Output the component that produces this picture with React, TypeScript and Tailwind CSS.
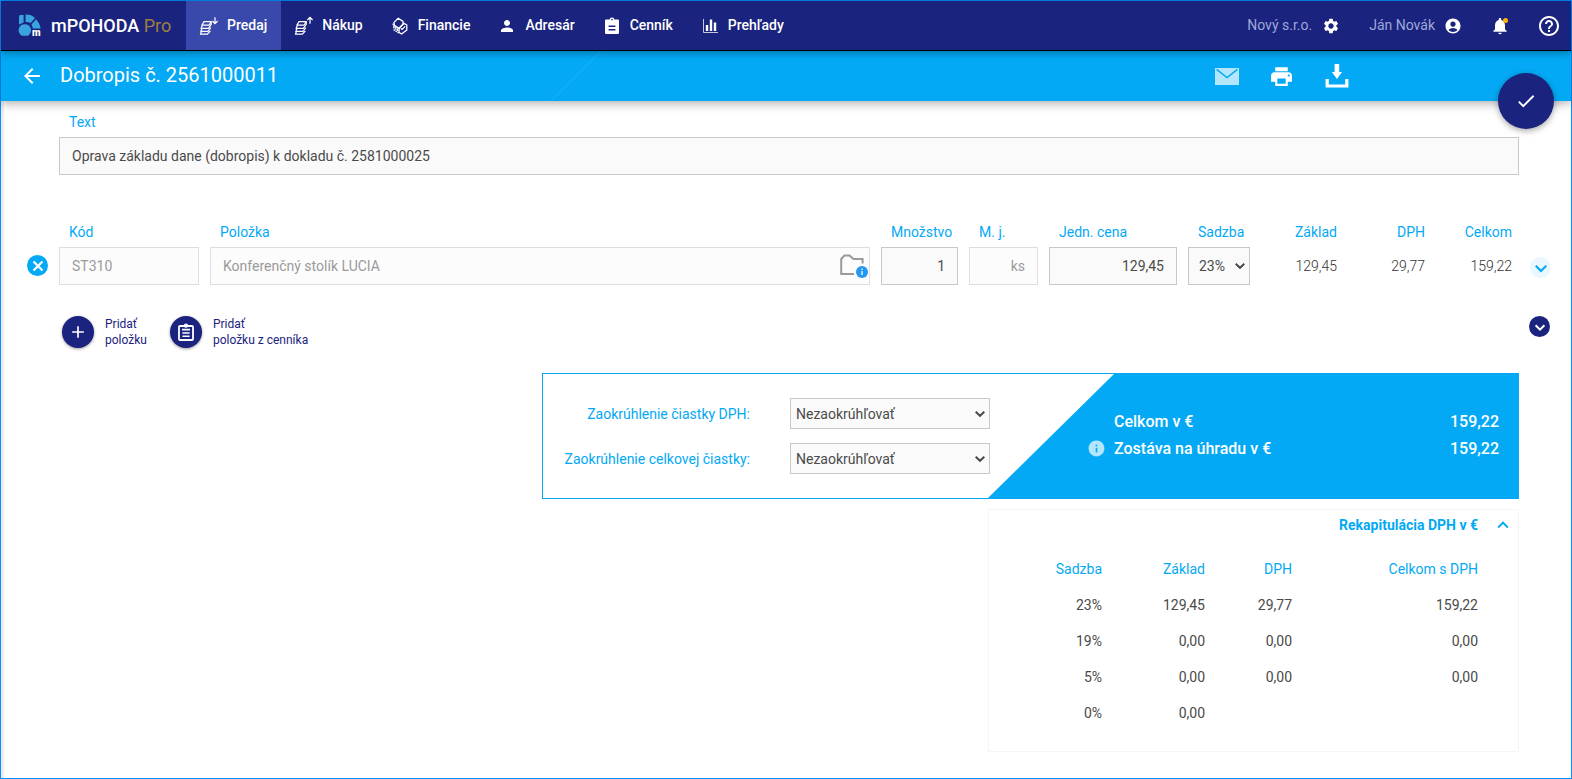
import React from "react";
import {
  MdAccountCircle,
  MdAdd,
  MdArrowBack,
  MdCheck,
  MdHelpOutline,
  MdInfo,
  MdKeyboardArrowUp,
  MdNotifications,
  MdPerson,
  MdPrint,
  MdSettings,
} from "react-icons/md";

function Logo() {
  return (
    <svg viewBox="0 0 24 24" className="size-6 shrink-0" aria-hidden="true">
      <g fill="#3aa3df">
        <path d="M2.2 1H5.6V8.6L1 10.6V2.6Q1.1 1.2 2.2 1Z" />
        <path d="M7.6 .6C11 .4 14.6 1.6 17 4L12.6 9C11 8.2 9.4 8 7.6 8Z" />
        <path d="M18 5.2C20.8 8 22.2 11 22.6 14.4H14.8C14.6 13 14 11.6 13.4 10.6Z" />
        <path d="M7 10.2a6 6 0 0 1 4.8 9.6Q10.8 21.8 9.4 21.8H4.4Q2.8 21.8 2 20A6 6 0 0 1 7 10.2Z" />
      </g>
      <text x="14" y="22" fill="#fff" fontSize="10" fontWeight="900" fontFamily="Roboto, sans-serif">
        m
      </text>
    </svg>
  );
}

function Coins({ up = false }: { up?: boolean }) {
  return (
    <svg viewBox="0 0 18 18" className="size-[18px] shrink-0 overflow-visible" fill="none" stroke="currentColor" aria-hidden="true">
      <g strokeWidth="1.2" strokeLinejoin="round">
        <path d="M4 4.6H11.2L9 8.2H1.8Z" />
        <path d="M2.4 8.4L1 11.4H8.4L11.2 7.4V4.6" />
        <path d="M2 11.6L.8 14.4H8L10.8 10.6" />
        <path d="M1.4 14.6L.4 17.2H7.4L10.4 13.8" />
      </g>
      {up ? (
        <path strokeWidth="1.2" d="M15 6.8V.6M12.4 3L15 .4 17.6 3" />
      ) : (
        <path strokeWidth="1.2" d="M15 .2V6.4M12.4 4L15 6.6 17.6 4" />
      )}
    </svg>
  );
}

function Banknotes() {
  return (
    <svg viewBox="0 0 18 18" className="size-[18px] shrink-0" fill="none" stroke="currentColor" strokeWidth="1.3" strokeLinejoin="round" aria-hidden="true">
      <path d="M3 5.4L7.2 1.2 12 4.4V7.4L8 11.4 3.4 8.2Z" />
      <path d="M8.2 11L13 6.2 15.8 8V13L10.6 17 8 15.4Z" />
      <path d="M9.8 11.2L11.2 12.4 14.2 9.4" />
      <path d="M2.2 6.6V8.8L7.8 12.6M2.2 10.2L7.8 14.2M2.6 12.6L8.4 16.4" strokeDasharray="1.6 .7" />
    </svg>
  );
}

function ClipboardSolid() {
  return (
    <svg viewBox="0 0 18 18" className="size-[18px] shrink-0" aria-hidden="true">
      <path fill="currentColor" d="M3.2 2.4H6.6A2.4 1.8 0 0 1 11.4 2.4H14.8Q16 2.4 16 3.6V15.8Q16 17 14.8 17H3.2Q2 17 2 15.8V3.6Q2 2.4 3.2 2.4Z" />
      <path stroke="#1a237e" strokeWidth="1.6" d="M5.6 9.2H12.4M5.6 12.8H12.4" />
      <circle cx="9" cy="2.6" r=".8" fill="#1a237e" />
    </svg>
  );
}

function BarChart() {
  return (
    <svg viewBox="0 0 18 18" className="size-[18px] shrink-0" fill="none" stroke="currentColor" aria-hidden="true">
      <path strokeWidth="1" opacity=".75" d="M2.5 2V15.5H17" />
      <path strokeWidth="2.4" d="M6 8V14M10 2.6V14M14 5.6V14" />
    </svg>
  );
}

function ClipboardOutline() {
  return (
    <svg viewBox="0 0 18 18" className="size-[18px]" fill="none" stroke="currentColor" aria-hidden="true">
      <rect x="2" y="3" width="14" height="14" rx="1" strokeWidth="1.8" />
      <path strokeWidth="1.6" d="M5 6.6H13M5.4 10H12.6M5.4 13.2H12.6" />
      <circle cx="9" cy="2.6" r="1.5" strokeWidth="1.4" />
    </svg>
  );
}

function Mail() {
  return (
    <svg viewBox="0 0 24 17" className="h-[17px] w-6" aria-hidden="true">
      <rect width="24" height="17" fill="#b3e5fc" />
      <path d="M1.6 1.4L12 9.6 22.4 1.4" fill="none" stroke="#03a9f4" strokeWidth="1.4" />
    </svg>
  );
}

function Download() {
  return (
    <svg viewBox="0 0 24 24" className="size-6" aria-hidden="true">
      <path fill="#fff" d="M9.6 0H14.2V8H17L12 15 6.8 8H9.6Z" />
      <path fill="#fff" d="M.6 15H3.8V20.4H20.2V15H23.4V23.6H.6Z" />
    </svg>
  );
}

function FolderInfo() {
  return (
    <svg viewBox="0 0 30 26" className="h-[26px] w-[30px]" fill="none" aria-hidden="true">
      <path stroke="#9a9a9a" strokeWidth="2" d="M15 21H2.2V6L5.4 2.6H10.6L14.4 6H23.6V10.6" />
      <circle cx="23" cy="19" r="6" fill="#2196f3" />
      <path stroke="#d6ecff" strokeWidth="1.6" d="M23 18V22M23 15.6V17" />
    </svg>
  );
}

const navItems = [
  { label: "Predaj", icon: <Coins />, active: true },
  { label: "Nákup", icon: <Coins up /> },
  { label: "Financie", icon: <Banknotes /> },
  { label: "Adresár", icon: <MdPerson className="size-[18px]" /> },
  { label: "Cenník", icon: <ClipboardSolid /> },
  { label: "Prehľady", icon: <BarChart /> },
];

const vatRows = [
  ["23%", "129,45", "29,77", "159,22"],
  ["19%", "0,00", "0,00", "0,00"],
  ["5%", "0,00", "0,00", "0,00"],
  ["0%", "0,00", "", ""],
];

const labelClass = "block text-sm leading-5 text-[#03a9f4]";
const fieldClass = "mt-[5px] block h-[38px] w-full border border-[#c8c8c8] bg-[#fafafa] px-3 text-sm text-[#4a4a4a] outline-none";
const disabledClass = "mt-[5px] block h-[38px] w-full border border-[#dedede] bg-[#fcfcfc] px-3 text-sm text-[#9a9a9a] outline-none";

function Amount({ label, value }: { label: string; value: string }) {
  return (
    <div className="text-right">
      <span className={labelClass}>{label}</span>
      <span className="mt-[5px] block text-sm leading-[38px] font-light text-[#333]">{value}</span>
    </div>
  );
}

function SelectBox({ id, options, className }: { id: string; options: string[]; className: string }) {
  return (
    <div className="relative">
      <select
        id={id}
        className={"block appearance-none border border-[#c8c8c8] bg-[#fafafa] text-sm text-[#4a4a4a] outline-none " + className}
      >
        {options.map((option) => (
          <option key={option}>{option}</option>
        ))}
      </select>
      <svg
        viewBox="0 0 10 10"
        className="pointer-events-none absolute inset-y-0 right-[5px] my-auto size-2.5"
        fill="none"
        aria-hidden="true"
      >
        <path d="M.7 2.8L5 6.8 9.3 2.8" stroke="#4a4a4a" strokeWidth="2" />
      </svg>
    </div>
  );
}

function Rounding({ id, label }: { id: string; label: string }) {
  return (
    <div className="flex items-center justify-end gap-10">
      <label htmlFor={id} className="text-sm text-[#03a9f4]">
        {label}
      </label>
      <SelectBox id={id} options={["Nezaokrúhľovať", "Zaokrúhľovať"]} className="h-[31px] w-[200px] pl-[5px]" />
    </div>
  );
}

export default function App() {
  return (
    <div className="flex min-h-screen flex-col border border-[#0090ff] bg-white font-[Roboto,sans-serif] text-sm text-[#4a4a4a]">
      <header className="relative z-20 flex h-[50px] items-stretch border-b border-black bg-[#1a237e] text-white shadow-[0_1px_8px_rgba(0,0,0,0.4)]">
        <a href="#" className="flex w-[185px] items-center gap-[9px] pl-[17px] text-lg">
          <Logo />
          <span className="font-medium">
            mPOHODA <span className="font-normal text-[#a08040]">Pro</span>
          </span>
        </a>
        <nav className="flex">
          {navItems.map((item) => (
            <a
              key={item.label}
              href="#"
              className={
                item.active
                  ? "flex items-center gap-[9px] bg-[#3949ab] px-3.5 font-medium"
                  : "flex items-center gap-[9px] px-3.5 font-medium"
              }
            >
              {item.icon}
              <span className="pb-0.5">{item.label}</span>
            </a>
          ))}
        </nav>
        <div className="ml-auto flex items-center pr-2.5 text-[#9fa8da]">
          <button className="mr-[29px] flex items-center gap-2.5">
            <span className="pb-0.5">Nový s.r.o.</span>
            <MdSettings className="size-[18px] text-white" />
          </button>
          <button className="mr-[28px] flex items-center gap-[9px]">
            <span className="pb-0.5">Ján Novák</span>
            <MdAccountCircle className="size-[18px] text-white" />
          </button>
          <button className="relative mr-[27px]" aria-label="Upozornenia">
            <MdNotifications className="size-5 text-white" />
            <span className="absolute top-0.5 right-0.5 size-[5px] rounded-full bg-[#ffb300]" />
          </button>
          <button aria-label="Pomocník">
            <MdHelpOutline className="size-6 text-white" />
          </button>
        </div>
      </header>

      <div className="relative z-10 flex h-[50px] items-center bg-[#03a9f4] text-white shadow-[0_2px_10px_rgba(0,0,0,0.35)]">
        <svg viewBox="0 0 50 50" className="absolute left-[35%] h-full" aria-hidden="true">
          <path d="M0 50L50 0" stroke="#fff" strokeWidth="1" opacity=".1" />
        </svg>
        <a href="#" className="mr-4 ml-[19px]" aria-label="Späť">
          <MdArrowBack className="size-6" />
        </a>
        <h1 className="pb-0.5 text-xl">Dobropis č. 2561000011</h1>
        <div className="mr-[207px] ml-auto flex items-center">
          <button aria-label="Odoslať" className="flex w-[55px] justify-center">
            <Mail />
          </button>
          <button aria-label="Tlačiť" className="flex w-[55px] justify-center">
            <MdPrint className="size-[25px]" />
          </button>
          <button aria-label="Stiahnuť" className="flex w-[55px] justify-center">
            <Download />
          </button>
        </div>
        <button
          aria-label="Uložiť"
          className="absolute top-[22px] right-[17px] flex size-14 items-center justify-center rounded-full bg-[#1a237e] shadow-[0_2px_6px_rgba(0,0,0,0.35)]"
        >
          <MdCheck className="size-[22px]" />
        </button>
      </div>

      <main className="flex-1 border-l-[3px] border-[#eeeaf0] pt-[11px] pr-5 pb-6 pl-[23px]">
        <div className="mx-8">
          <label htmlFor="text" className={labelClass + " pl-2.5"}>
            Text
          </label>
          <input id="text" className={fieldClass} defaultValue="Oprava základu dane (dobropis) k dokladu č. 2581000025" />
        </div>

        <div className="mt-[47px] grid grid-cols-[21px_140px_minmax(0,1fr)_77px_69px_128px_62px_76px_77px_76px_28px] gap-x-[11px]">
          <button aria-label="Odstrániť" className="mt-[33px] flex size-[21px] items-center justify-center rounded-full bg-[#03a9f4]">
            <svg viewBox="0 0 12 12" className="size-3" aria-hidden="true">
              <path d="M1.5 1.5L10.5 10.5M10.5 1.5L1.5 10.5" stroke="#fff" strokeWidth="2.2" />
            </svg>
          </button>
          <div>
            <label htmlFor="code" className={labelClass + " pl-2.5"}>
              Kód
            </label>
            <input id="code" disabled className={disabledClass} defaultValue="ST310" />
          </div>
          <div>
            <label htmlFor="item" className={labelClass + " pl-2.5"}>
              Položka
            </label>
            <div className="relative">
              <input id="item" disabled className={disabledClass} defaultValue="Konferenčný stolík LUCIA" />
              <button aria-label="Detail položky" className="absolute top-1.5 right-px">
                <FolderInfo />
              </button>
            </div>
          </div>
          <div>
            <label htmlFor="qty" className={labelClass + " pl-2.5"}>
              Množstvo
            </label>
            <input id="qty" className={fieldClass + " text-right"} defaultValue="1" />
          </div>
          <div>
            <label htmlFor="unit" className={labelClass + " pl-2.5"}>
              M. j.
            </label>
            <input id="unit" disabled className={disabledClass + " text-right"} defaultValue="ks" />
          </div>
          <div>
            <label htmlFor="price" className={labelClass + " pl-2.5"}>
              Jedn. cena
            </label>
            <input id="price" className={fieldClass + " text-right"} defaultValue="129,45" />
          </div>
          <div className="flex flex-col gap-[5px]">
            <label htmlFor="rate" className={labelClass + " pl-2.5"}>
              Sadzba
            </label>
            <SelectBox id="rate" options={["23%", "19%", "5%", "0%"]} className="h-[38px] w-full pl-2.5" />
          </div>
          <Amount label="Základ" value="129,45" />
          <Amount label="DPH" value="29,77" />
          <Amount label="Celkom" value="159,22" />
          <button
            aria-label="Rozbaliť položku"
            className="mt-[35px] flex size-[21px] items-center justify-center justify-self-end rounded-full bg-[#ebf7fe] text-[#03a9f4]"
          >
            <svg viewBox="0 0 12 12" className="size-3" fill="none" aria-hidden="true">
              <path d="M.8 3.8L6 9 11.2 3.8" stroke="currentColor" strokeWidth="2.2" />
            </svg>
          </button>
        </div>

        <div className="mt-[31px] flex items-start pl-[35px] text-xs leading-4 text-[#1a237e]">
          <button className="flex items-center gap-[11px] text-left">
            <span className="flex size-8 items-center justify-center rounded-full bg-[#1a237e] text-white shadow-[0_1px_3px_rgba(0,0,0,0.4)]">
              <MdAdd className="size-5" />
            </span>
            <span>
              Pridať
              <br />
              položku
            </span>
          </button>
          <button className="ml-[23px] flex items-center gap-[11px] text-left">
            <span className="flex size-8 items-center justify-center rounded-full bg-[#1a237e] text-white shadow-[0_1px_3px_rgba(0,0,0,0.4)]">
              <ClipboardOutline />
            </span>
            <span>
              Pridať
              <br />
              položku z cenníka
            </span>
          </button>
          <button aria-label="Rozbaliť všetko" className="mr-px ml-auto flex size-[21px] items-center justify-center rounded-full bg-[#1a237e]">
            <svg viewBox="0 0 12 12" className="size-3" fill="none" aria-hidden="true">
              <path d="M1.6 4.2L6 8.6 10.4 4.2" stroke="#fff" strokeWidth="2" />
            </svg>
          </button>
        </div>

        <div className="mx-8 mt-[25px] flex flex-col items-end">
          <section className="flex h-[126px] w-[977px] max-w-full border border-[#03a9f4]">
            <div className="flex flex-1 flex-col gap-3.5 pt-6">
              <Rounding id="round-vat" label="Zaokrúhlenie čiastky DPH:" />
              <Rounding id="round-total" label="Zaokrúhlenie celkovej čiastky:" />
            </div>
            <svg viewBox="0 0 126 124" className="-ml-0.5 h-[124px] w-[126px]" aria-hidden="true">
              <path d="M0 124L126 0V124Z" fill="#03a9f4" />
            </svg>
            <dl className="relative grid w-[404px] grid-cols-[1fr_auto] content-center gap-y-[3px] bg-[#03a9f4] pr-[19px] pb-0.5 text-base font-medium text-white">
              <dt>Celkom v €</dt>
              <dd>159,22</dd>
              <dt>
                <MdInfo className="absolute -left-[27px] size-[19px] translate-y-0.5 text-[#b3e5fc]" />
                Zostáva na úhradu v €
              </dt>
              <dd>159,22</dd>
            </dl>
          </section>

          <section className="mt-2.5 w-[531px] border border-[#f5f5f5] pb-5">
            <button className="ml-auto flex h-[30px] items-center gap-3.5 pr-1 font-bold text-[#03a9f4]">
              Rekapitulácia DPH v €
              <MdKeyboardArrowUp className="size-[22px]" />
            </button>
            <table className="mt-[11px] w-full table-fixed text-right">
              <colgroup>
                <col className="w-[113px]" />
                <col className="w-[103px]" />
                <col className="w-[87px]" />
                <col />
                <col className="w-10" />
              </colgroup>
              <thead>
                <tr className="h-9 text-[#03a9f4]">
                  <th className="font-normal">Sadzba</th>
                  <th className="font-normal">Základ</th>
                  <th className="font-normal">DPH</th>
                  <th className="font-normal">Celkom s DPH</th>
                  <td />
                </tr>
              </thead>
              <tbody>
                {vatRows.map((row) => (
                  <tr key={row[0]} className="h-9">
                    {row.map((cell, i) => (
                      <td key={i}>{cell}</td>
                    ))}
                    <td />
                  </tr>
                ))}
              </tbody>
            </table>
          </section>
        </div>
      </main>
    </div>
  );
}
